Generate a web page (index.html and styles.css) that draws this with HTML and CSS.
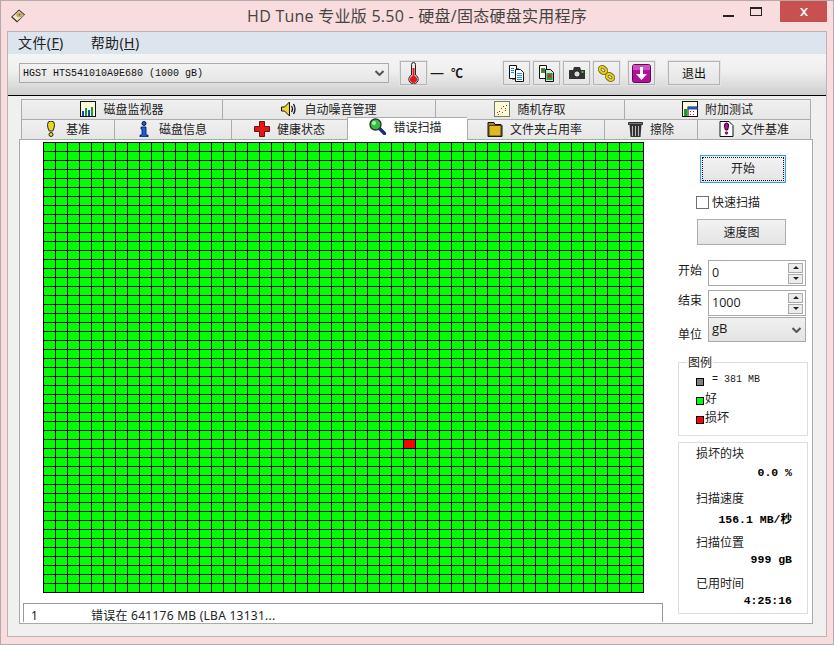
FILE: index.html
```html
<!DOCTYPE html>
<html lang="zh">
<head>
<meta charset="utf-8">
<title>HD Tune</title>
<link rel="stylesheet" href="styles.css">
</head>
<body>
<div class="window">
  <header class="titlebar">
    <div class="app-icon">
      <svg width="16" height="16" viewBox="0 0 16 16"><path d="M1 9 9 1.500l6 5-8 8z" fill="#2e2e28"/><path d="M2.500 8.800 9 2.800l5 4.200-6.800 6z" fill="#efe4c8"/><ellipse cx="9.500" cy="6.800" rx="3.300" ry="2.500" fill="#c9a860"/><circle cx="9.500" cy="6.800" r=".8" fill="#6b5a30"/></svg>
    </div>
    <h1 class="title">HD Tune 专业版 5.50 - 硬盘/固态硬盘实用程序</h1>
    <div class="caption">
      <span class="cap-min"></span>
      <span class="cap-max"></span>
      <span class="cap-close"><svg width="10" height="8" viewBox="0 0 10 8"><path d="M1 0h2l2 2.400L7 0h2L6 4l3 4H7L5 5.600 3 8H1l3-4z" fill="#fff"/></svg></span>
    </div>
  </header>
  <div class="frame">
    <nav class="menubar">
      <span class="menu-item">文件(<u>F</u>)</span>
      <span class="menu-item">帮助(<u>H</u>)</span>
    </nav>
    <div class="toolbar">
      <div class="drive-select">
        <span class="drive-name">HGST HTS541010A9E680 (1000 gB)</span>
        <svg width="9" height="6" viewBox="0 0 9 6"><path d="M.5 1 4.500 5l4-4" fill="none" stroke="#555" stroke-width="2"/></svg>
      </div>
      <button class="tool-btn tool-first">
        <svg width="11" height="22" viewBox="0 0 11 22"><path d="M3.500 2.500a2 2 0 0 1 4 0V13a4.700 4.700 0 1 1-4 0z" fill="#f0e8e8" stroke="#222"/><path d="M4.500 6h2v8a3.600 3.600 0 1 1-2 0z" fill="#e01818"/></svg>
      </button>
      <span class="temp-value">—</span>
      <span class="temp-unit">℃</span>
      <button class="tool-btn tool-group">
        <svg width="16" height="17" viewBox="0 0 16 17"><path d="M3 3h7v12H3z" fill="#888"/><path d="M.5.500h7v13h-7z" fill="#fff" stroke="#111"/><path d="M6.500 4.500h5l3 3v9h-8z" fill="#fff" stroke="#111"/><path d="M8 8.500h5M8 10.500h5M8 12.500h5M8 14.500h5" stroke="#1a8cf0"/><path d="M2 3.500h3M2 5.500h3M2 7.500h3" stroke="#1a8cf0"/></svg>
      </button>
      <button class="tool-btn tool-next">
        <svg width="16" height="17" viewBox="0 0 16 17"><path d="M.5.500h7v13h-7z" fill="#fff" stroke="#111"/><path d="M6.500 4.500h5l3 3v9h-8z" fill="#ddd" stroke="#111"/><rect x="2" y="3" width="4" height="5" fill="#20a040"/><rect x="3" y="4" width="2" height="2" fill="#e02020"/><rect x="7.500" y="8" width="6" height="7" fill="#20a040"/><rect x="9" y="9.500" width="3" height="3" fill="#e02020"/></svg>
      </button>
      <button class="tool-btn tool-next">
        <svg width="16" height="14" viewBox="0 0 16 14"><path d="M0 4h4l1-3h6l1 3h4v9H0z" fill="#333"/><circle cx="8" cy="8" r="3.200" fill="#ddd" stroke="#111"/><rect x="12.500" y="5" width="2" height="2" fill="#3c3"/></svg>
      </button>
      <button class="tool-btn tool-next">
        <svg width="17" height="17" viewBox="0 0 17 17"><g fill="none" stroke="#6a6210" stroke-width="3.600"><rect x="1.500" y="2.500" width="7" height="5" rx="2.500" transform="rotate(40 5 5)"/><rect x="8.500" y="9.500" width="7" height="5" rx="2.500" transform="rotate(40 12 12)"/></g><g fill="none" stroke="#e8cc20" stroke-width="2"><rect x="1.500" y="2.500" width="7" height="5" rx="2.500" transform="rotate(40 5 5)"/><rect x="8.500" y="9.500" width="7" height="5" rx="2.500" transform="rotate(40 12 12)"/></g></svg>
      </button>
      <button class="tool-btn tool-save">
        <svg width="19" height="19" viewBox="0 0 19 19"><rect x=".5" y=".5" width="18" height="18" rx="2" fill="#b0109a" stroke="#5a0a50"/><path d="M1 1h17v5H1z" fill="#d050c0"/><path d="M8 3h3v7h4l-5.500 6L4 10h4z" fill="#fff"/></svg>
      </button>
      <button class="tool-btn tool-exit">退出</button>
    </div>
    <div class="tabs">
      <div class="tab-row">
        <div class="tab w201"><svg width="16" height="16" viewBox="0 0 16 16"><rect x=".5" y=".5" width="15" height="15" fill="#ffffe0" stroke="#111"/><path d="M2 10h2v5H2z" fill="#1a3cd0"/><path d="M5 7h2v8H5z" fill="#10a030"/><path d="M8 9h2v6H8z" fill="#1a3cd0"/><path d="M11 6h2v9h-2z" fill="#10a030"/></svg>磁盘监视器</div>
        <div class="tab w213"><svg width="16" height="16" viewBox="0 0 16 16"><path d="M.5 6h3l5-5v14l-5-5h-3z" fill="#ecd830" stroke="#111"/><path d="M10.500 5q2 3 0 6M12.500 3q3 5 0 10" fill="none" stroke="#111" stroke-width="1.300"/></svg>自动噪音管理</div>
        <div class="tab w189"><svg width="16" height="16" viewBox="0 0 16 16"><rect x=".5" y=".5" width="15" height="15" fill="#fff8d0" stroke="#777"/><g fill="#d02020"><rect x="3" y="11" width="1" height="1"/><rect x="7" y="7" width="1" height="1"/><rect x="11" y="9" width="1" height="1"/></g><g fill="#2040c0"><rect x="5" y="10" width="1" height="1"/><rect x="9" y="5" width="1" height="1"/><rect x="12" y="4" width="1" height="1"/></g><g fill="#10a030"><rect x="4" y="13" width="1" height="1"/><rect x="8" y="11" width="1" height="1"/><rect x="11" y="7" width="1" height="1"/></g></svg>随机存取</div>
        <div class="tab w187"><svg width="16" height="16" viewBox="0 0 16 16"><rect x=".5" y=".5" width="15" height="15" fill="#ffffe0" stroke="#111"/><path d="M2 8h3v7H2z" fill="#10a030"/><rect x="6" y="6" width="9.500" height="9.500" fill="#fff" stroke="#111"/><path d="M6 6h9.500v2.500H6z" fill="#2050d0"/><path d="M8 10h1v1H8zM11 10h1v1h-1zM8 13h1v1H8zM11 13h1v1h-1z" fill="#d02020"/></svg>附加测试</div>
      </div>
      <div class="tab-row">
        <div class="tab w93"><svg class="icon-narrow" width="10" height="16" viewBox="0 0 10 16"><path d="M1.500 3.500a3.500 3.500 0 0 1 7 0q0 3.500-1.700 6.500H3.200Q1.500 7 1.500 3.500z" fill="#e8d820" stroke="#222"/><circle cx="5" cy="13.500" r="2" fill="#e8d820" stroke="#222"/></svg>基准</div>
        <div class="tab w117"><svg class="icon-narrow" width="10" height="16" viewBox="0 0 10 16"><circle cx="5" cy="2.500" r="2" fill="#1a60e0" stroke="#0a0a40"/><path d="M2 6h5v8h2v2H1v-2h2V8H2z" fill="#1a60e0" stroke="#0a0a40" stroke-width=".8"/></svg>磁盘信息</div>
        <div class="tab w116"><svg width="16" height="16" viewBox="0 0 16 16"><path d="M5.500.5h5v5h5v5h-5v5h-5v-5h-5v-5h5z" fill="#e01818" stroke="#6a1010"/></svg>健康状态</div>
        <div class="tab tab-active w120"><svg width="17" height="17" viewBox="0 0 17 17"><path d="M9.500 9.500 15.500 15.500" stroke="#1a2a90" stroke-width="3.500" stroke-linecap="round"/><circle cx="6.500" cy="6.500" r="5.500" fill="#30c040" stroke="#333" stroke-width="1.400"/><circle cx="5" cy="5" r="2" fill="#b0f0b0"/></svg>错误扫描</div>
        <div class="tab tab-folder w137"><svg width="16" height="16" viewBox="0 0 16 16"><path d="M1 1.500h6l1 2h6l1 1v11H1z" fill="#a88408" stroke="#111"/><path d="M2 4.500h12V15H2z" fill="#e0b820" stroke="#222" stroke-width=".8"/></svg>文件夹占用率</div>
        <div class="tab w93"><svg width="15" height="16" viewBox="0 0 15 16"><path d="M.5 1.500h14v2H.5z" fill="#777" stroke="#111" stroke-width=".8"/><path d="M1.500 3.500h12l-1 12.500h-10z" fill="#333"/><path d="M4.500 5v10M7.500 5v10M10.500 5v10" stroke="#bbb"/></svg>擦除</div>
        <div class="tab w114"><svg width="15" height="16" viewBox="0 0 15 16"><path d="M1 .5h9l4 4v11H1z" fill="#fff" stroke="#111"/><path d="M5.500 4a2 2 0 0 1 4 0q0 3-1 5h-2q-1-2-1-5z" fill="#b010b0" stroke="#300"/><circle cx="7.500" cy="12" r="1.300" fill="#b010b0" stroke="#300" stroke-width=".6"/></svg>文件基准</div>
      </div>
    </div>
    <main class="panel">
      <section class="scan">
        <div class="block-grid"><span class="bad-block"></span></div>
        <div class="error-list">
          <span class="err-num">1</span>
          <span class="err-text">错误在 641176 MB (LBA 13131...</span>
        </div>
      </section>
      <aside class="side">
        <button class="btn btn-start"><span class="focus-ring">开始</span></button>
        <label class="check-row"><span class="checkbox"></span><span class="check-text">快速扫描</span></label>
        <button class="btn btn-chart">速度图</button>
        <div class="field field-first">
          <span class="field-label">开始</span>
          <div class="spin-input"><span class="spin-value">0</span>
            <span class="spin-btns"><span class="spin-btn"><i class="arrow-up"></i></span><span class="spin-btn"><i class="arrow-down"></i></span></span>
          </div>
        </div>
        <div class="field">
          <span class="field-label">结束</span>
          <div class="spin-input"><span class="spin-value">1000</span>
            <span class="spin-btns"><span class="spin-btn"><i class="arrow-up"></i></span><span class="spin-btn"><i class="arrow-down"></i></span></span>
          </div>
        </div>
        <div class="field field-unit">
          <span class="field-label unit-label">单位</span>
          <div class="unit-select"><span class="unit-value">gB</span>
            <svg width="9" height="6" viewBox="0 0 9 6"><path d="M.5 1 4.500 5l4-4" fill="none" stroke="#555" stroke-width="2"/></svg>
          </div>
        </div>
        <div class="legend">
          <span class="legend-title">图例</span>
          <div class="legend-row"><span class="swatch sw-gray"></span><span class="legend-size">= 381 MB</span></div>
          <div class="legend-row"><span class="swatch sw-green"></span><span class="legend-text">好</span></div>
          <div class="legend-row"><span class="swatch sw-red"></span><span class="legend-text">损坏</span></div>
        </div>
        <div class="stats">
          <span class="stat-label">损坏的块</span>
          <span class="stat-value">0.0 %</span>
          <span class="stat-label">扫描速度</span>
          <span class="stat-value">156.1 MB/秒</span>
          <span class="stat-label">扫描位置</span>
          <span class="stat-value">999 gB</span>
          <span class="stat-label">已用时间</span>
          <span class="stat-value">4:25:16</span>
        </div>
      </aside>
    </main>
  </div>
</div>
</body>
</html>
```

FILE: styles.css
```css
* { box-sizing: border-box; }
html, body { margin: 0; padding: 0; }
body {
  width: 834px;
  height: 645px;
  overflow: hidden;
  font-family: "Noto Sans", "Noto Sans CJK SC", sans-serif;
  font-size: 12px;
  color: #1a1a1a;
}
.window {
  width: 834px;
  height: 645px;
  display: flex;
  flex-direction: column;
  padding: 0 6px 7px;
  background: #f9dcdd;
  border: 1px solid #b5a9aa;
}
.titlebar {
  flex: 0 0 30px;
  display: grid;
  grid-template-columns: 1fr auto 1fr;
  align-items: start;
}
.app-icon { padding: 7px 0 0 3px; line-height: 0; }
.title {
  margin: 0;
  font-size: 16px;
  font-weight: 400;
  letter-spacing: .25px;
  line-height: 30px;
  color: #444;
  font-family: "Open Sans", "Noto Sans CJK SC", sans-serif;
  white-space: nowrap;
}
.caption { display: flex; justify-content: flex-end; align-items: flex-start; }
.cap-min { width: 11px; height: 2px; margin: 14px 16px 0 0; background: #222; }
.cap-max { width: 12px; height: 9px; margin: 6px 18px 0 0; border: 1px solid #222; border-top-width: 2px; }
.cap-close {
  width: 47px;
  height: 21px;
  background: #c75050;
  display: flex;
  align-items: center;
  justify-content: center;
}
.frame {
  flex: 1;
  display: flex;
  flex-direction: column;
  background: #f0f0f0;
  border: 1px solid #bdb3b4;
}
.menubar {
  height: 22px;
  display: flex;
  gap: 27px;
  padding-left: 10px;
  background: #dce4ee;
  font-size: 14px;
  letter-spacing: .4px;
  line-height: 22px;
  color: #222;
}
.toolbar {
  height: 42px;
  display: flex;
  align-items: center;
  padding: 0 0 3px 11px;
  background: linear-gradient(#f4f4f4, #f0f0f0 40%, #cfcfcf);
  border-bottom: 1px solid #000;
}
.drive-select {
  width: 370px;
  height: 20px;
  display: flex;
  align-items: center;
  justify-content: space-between;
  padding: 0 4px 0 3px;
  border: 1px solid #aaa;
  background: linear-gradient(#f2f2f2, #e6e6e6);
}
.drive-name {
  font-family: "Liberation Mono", monospace;
  font-size: 10px;
  color: #111;
}
.tool-btn {
  width: 27px;
  height: 24px;
  padding: 0;
  display: flex;
  align-items: center;
  justify-content: center;
  border: 1px solid #b4b4b4;
  outline: 1px solid #e4e4e4;
  background: linear-gradient(#f2f2f2, #e4e4e4);
  font: inherit;
  color: #111;
}
.tool-first { margin-left: 11px; }
.temp-value { width: 14px; margin-left: 3px; font-size: 14px; text-align: center; line-height: 14px; }
.temp-unit { margin-left: 7px; font-size: 12px; font-weight: 700; font-family: "Liberation Serif", "Noto Sans CJK SC", serif; }
.tool-group { margin-left: 40px; }
.tool-next { margin-left: 3px; }
.tool-save { margin-left: 8px; }
.tool-exit { width: 52px; margin-left: 13px; font-size: 12px; }
.tabs { padding: 3px 0 0 13px; }
.tab-row { display: flex; height: 20px; align-items: flex-end; }
.tab {
  height: 20px;
  display: flex;
  align-items: center;
  justify-content: center;
  gap: 7px;
  padding-bottom: 2px;
  border: 1px solid #acacac;
  border-right-width: 0;
  border-bottom-width: 0;
  background: linear-gradient(#f0f0f0, #e6e6e6);
  color: #222;
  white-space: nowrap;
}
.tab:last-child { border-right-width: 1px; }
.tab svg { flex: none; }
.icon-narrow { margin-right: 3px; }
.tab-folder { padding-right: 3px; }
.tab-active {
  height: 23px;
  margin-bottom: -1px;
  padding: 0 4px 5px 0;
  position: relative;
  z-index: 1;
  background: #fff;
  border-bottom: 0;
  border-right-width: 0;
}
.w93 { width: 93px; }
.w114 { width: 114px; }
.w116 { width: 116px; }
.w117 { width: 117px; }
.w120 { width: 120px; }
.w137 { width: 137px; }
.w187 { width: 187px; }
.w189 { width: 189px; }
.w201 { width: 201px; }
.w213 { width: 213px; }
.panel {
  width: 794px;
  height: 485px;
  margin-left: 11px;
  display: flex;
  background: #fff;
  border: 1px solid #aaa;
}
.scan { width: 658px; padding: 2px 0 0 23px; }
.block-grid {
  position: relative;
  width: 601px;
  height: 451px;
  background-color: #0f0;
  background-image:
    linear-gradient(to right, #000 1px, transparent 1px),
    linear-gradient(to bottom, #000 1px, transparent 1px);
  background-size: 12px 9px;
}
.bad-block {
  position: absolute;
  left: 361px;
  top: 298px;
  width: 11px;
  height: 8px;
  background: #f00;
}
.error-list {
  width: 640px;
  height: 19px;
  margin: 10px 0 0 -20px;
  display: flex;
  padding: 2px 0 0 7px;
  border: 1px solid #999;
  border-bottom: 0;
  line-height: 20px;
  font-size: 12px;
  letter-spacing: .25px;
  color: #222;
}
.err-num { width: 60px; }
.err-text { white-space: nowrap; }
.side { flex: 1; display: flex; flex-direction: column; align-items: flex-start; }
.btn {
  padding: 0;
  font: inherit;
  color: #222;
  background: linear-gradient(#f2f2f2, #e4e4e4);
  border: 1px solid #aeaeae;
}
.btn-start {
  width: 86px;
  height: 28px;
  margin: 15px 0 0 22px;
  padding: 1px;
  border-color: #3399ff;
}
.focus-ring {
  display: block;
  height: 100%;
  line-height: 22px;
  border: 1px dotted #111;
}
.check-row {
  display: flex;
  align-items: center;
  gap: 3px;
  height: 13px;
  margin: 13px 0 0 18px;
  color: #222;
}
.check-text { padding-bottom: 1px; }
.checkbox { width: 13px; height: 13px; background: #fff; border: 1px solid #707070; }
.btn-chart { width: 89px; height: 26px; margin: 10px 0 0 19px; }
.field { display: flex; align-items: center; margin-top: 4px; width: 128px; }
.field-first { margin-top: 15px; }
.field-label { width: 30px; padding-bottom: 6px; }
.field-unit { margin-top: 1px; align-items: flex-end; }
.unit-label { padding-bottom: 0; margin-bottom: -1px; }
.spin-input {
  width: 98px;
  height: 26px;
  display: flex;
  align-items: center;
  justify-content: space-between;
  padding: 0 2px 0 3px;
  border: 1px solid #aaa;
  background: #fff;
}
.spin-value { font-family: "Open Sans", sans-serif; font-size: 12.5px; padding-bottom: 1px; }
.spin-btns { display: flex; flex-direction: column; gap: 1px; }
.spin-btn {
  width: 15px;
  height: 10px;
  display: flex;
  align-items: center;
  justify-content: center;
  border: 1px solid #aaa;
  background: #ececec;
}
.arrow-up, .arrow-down { width: 0; height: 0; border: 3px solid transparent; }
.arrow-up { border-bottom: 3px solid #222; border-top: 0; }
.arrow-down { border-top: 3px solid #222; border-bottom: 0; }
.unit-select {
  width: 98px;
  height: 25px;
  display: flex;
  align-items: center;
  justify-content: space-between;
  padding: 0 4px 0 3px;
  border: 1px solid #aaa;
  background: linear-gradient(#f0f0f0, #e4e4e4);
}
.unit-value { font-family: "Open Sans", sans-serif; font-size: 13px; padding-bottom: 4px; }
.legend {
  position: relative;
  width: 130px;
  height: 74px;
  margin-top: 20px;
  padding: 9px 0 0 17px;
  border: 1px solid #ddd;
}
.legend-title {
  position: absolute;
  left: 8px;
  top: -8px;
  padding: 0 1px;
  background: #fff;
  line-height: 16px;
  color: #222;
}
.legend-row { display: flex; align-items: center; height: 19px; }
.swatch { width: 8px; height: 8px; border: 1px solid #000; }
.sw-gray { background: #808080; }
.sw-green { background: #0f0; }
.sw-red { background: #f00; }
.legend-size {
  margin-left: 8px;
  padding-bottom: 4px;
  font-family: "Liberation Mono", monospace;
  font-size: 10px;
}
.legend-text { margin-left: 1px; padding-bottom: 6px; color: #222; }
.stats {
  width: 130px;
  height: 172px;
  margin-top: 6px;
  padding: 3px 15px 0 17px;
  display: grid;
  grid-template-rows: 19px 26px 21px 23px 17px 24px 17px 17px;
  border: 1px solid #ddd;
  line-height: 16px;
}
.stat-label { color: #222; }
.stat-value {
  text-align: right;
  font-family: "Liberation Mono", "Noto Sans CJK SC", monospace;
  font-weight: 700;
  font-size: 11.5px;
  color: #000;
}
```
